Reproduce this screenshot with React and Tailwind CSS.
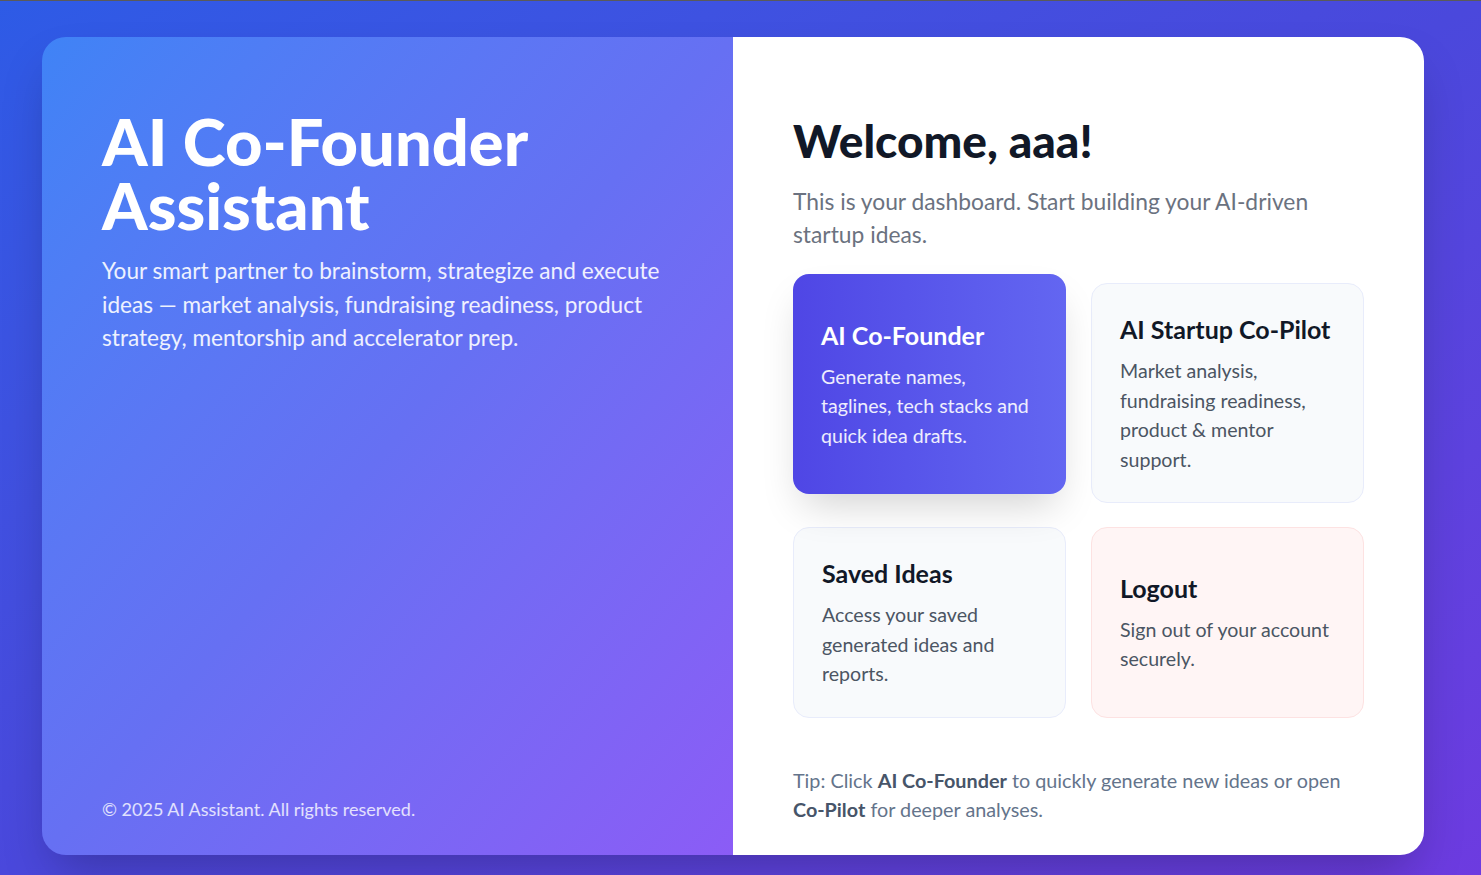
import React from 'react';

const font = { fontFamily: 'Lato, "Open Sans", sans-serif' };

function FeatureCard({ title, text, variant }) {
    const styles = {
        primary: "bg-gradient-to-r from-[#4f46e5] to-[#6366f1] shadow-[0_20px_40px_-10px_rgba(0,0,0,0.18)] -translate-y-[9px]",
        plain: "bg-[#f8fafc] border border-[#e8ecfb]",
        danger: "bg-[#fff5f5] border border-[#fde2e2]",
    };
    const primary = variant === 'primary';
    return (
        <div className={`rounded-2xl p-7 flex flex-col justify-center cursor-pointer ${styles[variant]}`}>
            <h3 className={`text-[25px] font-bold leading-[34px] ${primary ? 'text-white' : 'text-[#111827]'}`}>{title}</h3>
            <p className={`mt-[10px] text-[19.6px] leading-[29.5px] ${primary ? 'text-white/90' : 'text-[#4b5563]'}`}>{text}</p>
        </div>
    );
}

export default function App() {
    return (
        <div style={font} className="w-[1481px] h-[875px] overflow-hidden bg-gradient-to-br from-[#2d5be6] via-[#4a48dc] to-[#6d3be0] flex flex-col">
            <div className="h-px bg-[#5a5a5a]" />
            <div className="pt-[36px] pl-[42px]">
                <div className="w-[1382px] h-[818px] rounded-3xl overflow-hidden flex shadow-2xl">
                    {/* Left — brand */}
                    <div className="w-1/2 bg-gradient-to-br from-[#3f83f6] via-[#6670f3] to-[#8b5cf6] px-[60px] pt-[72px] pb-[32px] flex flex-col">
                        <h1 className="text-[65px] font-black leading-[64px] text-white">AI Co-Founder Assistant</h1>
                        <p className="mt-[17px] text-[22.6px] leading-[33.5px] text-white/90">
                            Your smart partner to brainstorm, strategize and execute ideas — market analysis, fundraising readiness, product strategy, mentorship and accelerator prep.
                        </p>
                        <div className="mt-auto text-[18px] text-white/80">© 2025 AI Assistant. All rights reserved.</div>
                    </div>

                    {/* Right — dashboard */}
                    <div className="w-1/2 bg-white px-[60px] pt-[78px]">
                        <h2 className="text-[46px] font-black leading-[52px] text-[#111827]">Welcome, aaa!</h2>
                        <p className="mt-[18px] text-[22.8px] leading-[33px] text-[#6b7280]">
                            This is your dashboard. Start building your AI-driven startup ideas.
                        </p>

                        <div className="mt-[32px] grid grid-cols-2 gap-x-[25px] gap-y-[24px]">
                            <FeatureCard variant="primary" title="AI Co-Founder" text="Generate names, taglines, tech stacks and quick idea drafts." />
                            <FeatureCard variant="plain" title="AI Startup Co-Pilot" text="Market analysis, fundraising readiness, product & mentor support." />
                            <FeatureCard variant="plain" title="Saved Ideas" text="Access your saved generated ideas and reports." />
                            <FeatureCard variant="danger" title="Logout" text="Sign out of your account securely." />
                        </div>

                        <p className="mt-[48px] text-[19.8px] leading-[29px] text-[#64748b]">
                            Tip: Click <span className="font-bold text-[#475569]">AI Co-Founder</span> to quickly generate new ideas or open <span className="font-bold text-[#475569]">Co-Pilot</span> for deeper analyses.
                        </p>
                    </div>
                </div>
            </div>
        </div>
    );
}
